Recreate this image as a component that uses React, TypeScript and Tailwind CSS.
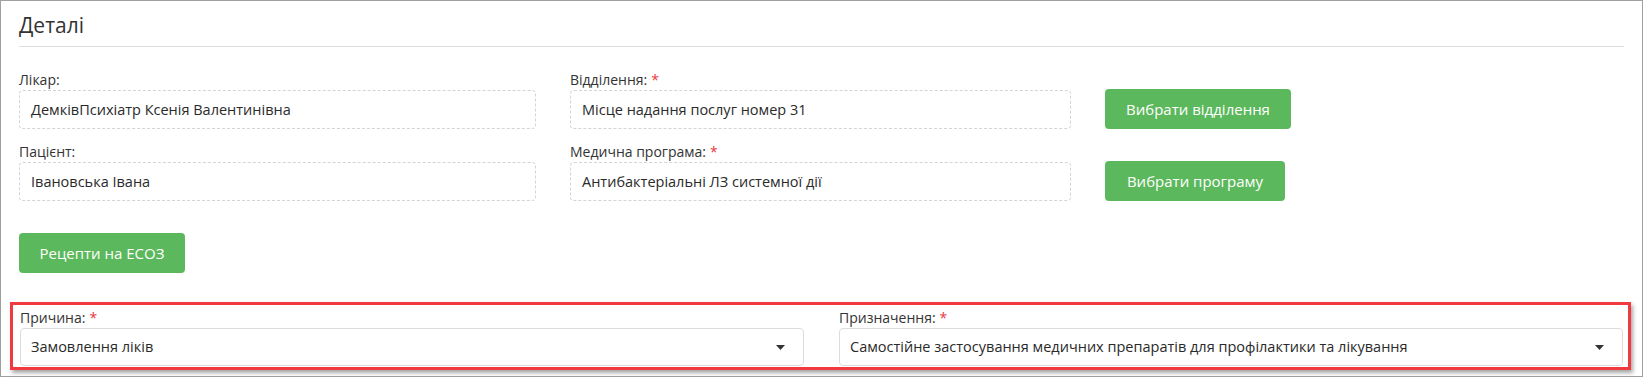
function Caret() {
  return (
    <svg width="9" height="5" viewBox="0 0 9 5" aria-hidden>
      <path d="M0 0h9L4.5 5z" fill="#333" />
    </svg>
  );
}

function Label({ text, required }: { text: string; required?: boolean }) {
  return (
    <div className="h-[20px] leading-[20px] text-[14px] text-[#333]">
      {text}
      {required && <span className="ml-[4px] text-[#e8383d]">*</span>}
    </div>
  );
}

function ReadField({ label, value, required, width }: { label: string; value: string; required?: boolean; width: string }) {
  return (
    <div className={width}>
      <Label text={label} required={required} />
      <div className="h-[39px] flex items-center px-[11px] rounded-[4px] border border-dashed border-[#d4d4d4] text-[14.5px] text-[#2a2a2a]">
        {value}
      </div>
    </div>
  );
}

function GreenButton({ children, width }: { children: string; width: string }) {
  return (
    <button className={`${width} h-[40px] rounded-[4px] bg-[#5cb85c] text-white text-[15px] flex items-center justify-center`}>
      {children}
    </button>
  );
}

function SelectField({ label, value }: { label: string; value: string }) {
  return (
    <div>
      <Label text={label} required />
      <div className="h-[38px] flex items-center justify-between pl-[10px] pr-[18px] rounded-[4px] border border-[#dcdcdc] bg-white text-[14.5px] text-[#2a2a2a]">
        <span>{value}</span>
        <Caret />
      </div>
    </div>
  );
}

export default function App() {
  return (
    <div className="w-[1643px] h-[377px] border border-[#a0a0a0] bg-white font-['Open_Sans',sans-serif] text-[#333]">
      <div className="px-[18px] pt-[9px]">
        <h2 className="text-[21px] leading-[30px] text-[#333]">Деталі</h2>
        <div className="mt-[6px] h-px bg-[#dedede]" />

        <div className="mt-[23px] flex items-end gap-[34px]">
          <ReadField width="w-[517px]" label="Лікар:" value="ДемківПсихіатр Ксенія Валентинівна" />
          <ReadField width="w-[501px]" label="Відділення:" value="Місце надання послуг номер 31" required />
          <GreenButton width="w-[186px]">Вибрати відділення</GreenButton>
        </div>

        <div className="mt-[13px] flex items-end gap-[34px]">
          <ReadField width="w-[517px]" label="Пацієнт:" value="Івановська Івана" />
          <ReadField width="w-[501px]" label="Медична програма:" value="Антибактеріальні ЛЗ системної дії" required />
          <GreenButton width="w-[180px]">Вибрати програму</GreenButton>
        </div>

        <div className="mt-[32px]">
          <GreenButton width="w-[166px]">Рецепти на ЕСОЗ</GreenButton>
        </div>

        {/* highlighted row */}
        <div className="mt-[29px] -ml-[9px] -mr-[7px] border-[3px] border-[#f03a40] pt-[3px] pb-[1px] pl-[7px] pr-[5px] shadow-[2px_3px_4px_rgba(0,0,0,0.35)]">
          <div className="grid grid-cols-2 gap-[35px]">
            <SelectField label="Причина:" value="Замовлення ліків" />
            <SelectField label="Призначення:" value="Самостійне застосування медичних препаратів для профілактики та лікування" />
          </div>
        </div>
      </div>
    </div>
  );
}
